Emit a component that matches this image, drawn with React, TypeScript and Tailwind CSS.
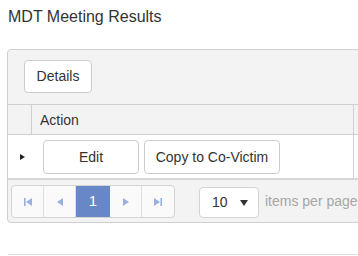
import { useState } from "react";

export default function App() {
  const [page] = useState(1);
  const [size] = useState(10);

  return (
    <div className="w-[358px] h-[256px] overflow-hidden bg-white font-['Liberation_Sans',Arial,sans-serif] text-[#333]">
      <h1 className="pl-[8px] pt-[7px] h-[49px] text-[16px] leading-[19px]">MDT Meeting Results</h1>
      <div className="ml-[7px] w-[370px] border border-[#cfcfcf] rounded-[4px] bg-[#f3f3f3]">
        <div className="h-[54px] pl-[16px] pt-[10px]">
          <button className="h-[33px] w-[68px] rounded-[4px] border border-[#ccc] bg-white text-[14px]">
            Details
          </button>
        </div>
        <div className="flex h-[30px] border-t border-[#cfcfcf]">
          <div className="w-[24px] border-r border-[#cfcfcf]" />
          <div className="w-[322px] border-r border-[#cfcfcf] pl-[8px] text-[14px] leading-[30px]">
            Action
          </div>
        </div>
        <div className="flex h-[46px] bg-white border-t border-[#cfcfcf] border-b-2 border-b-[#d6d6d6]">
          <div className="w-[24px] flex items-center justify-center pl-[4px]">
            <span className="w-0 h-0 border-y-[3.5px] border-y-transparent border-l-[5px] border-l-[#222]" />
          </div>
          <div className="w-[322px] border-r border-[#cfcfcf] pl-[11px] pt-[5px] flex gap-[5px]">
            <button className="h-[34px] w-[96px] rounded-[4px] border border-[#ccc] bg-white text-[14px]">Edit</button>
            <button className="h-[34px] w-[136px] rounded-[4px] border border-[#ccc] bg-white text-[14px]">
              Copy to Co-Victim
            </button>
          </div>
        </div>
        <div className="h-[42px] flex items-start pl-[3px] pt-[5px]">
          <div className="flex h-[33px] rounded-[4px] border border-[#d4d4d4] bg-[#fafafa] overflow-hidden">
            <PagerBtn>
              <svg width="8" height="8" viewBox="0 0 8 8"><rect x="0" y="0" width="1.6" height="8" fill="#9ab0de" /><path d="M8 0 L2 4 L8 8Z" fill="#9ab0de" /></svg>
            </PagerBtn>
            <PagerBtn>
              <svg width="6" height="8" viewBox="0 0 6 8"><path d="M6 0 L0 4 L6 8Z" fill="#9ab0de" /></svg>
            </PagerBtn>
            <div className="w-[34px] bg-[#6787c6] text-white text-[15px] flex items-center justify-center">
              {page}
            </div>
            <PagerBtn>
              <svg width="6" height="8" viewBox="0 0 6 8"><path d="M0 0 L6 4 L0 8Z" fill="#9ab0de" /></svg>
            </PagerBtn>
            <PagerBtn last>
              <svg width="8" height="8" viewBox="0 0 8 8"><path d="M0 0 L6 4 L0 8Z" fill="#9ab0de" /><rect x="6.4" y="0" width="1.6" height="8" fill="#9ab0de" /></svg>
            </PagerBtn>
          </div>
          <div className="ml-[24px] mt-[2px] h-[31px] w-[60px] rounded-[4px] border border-[#d4d4d4] bg-white flex items-center pl-[12px] pr-[10px] justify-between text-[14px]">
            <span>{size}</span>
            <span className="w-0 h-0 border-x-[4px] border-x-transparent border-t-[6px] border-t-[#333]" />
          </div>
          <span className="ml-[6px] mt-[8px] text-[14px] leading-[16px] text-[#a6a6a6] whitespace-nowrap">items per page</span>
        </div>
      </div>
      <div className="ml-[8px] mt-[31px] h-px bg-[#ddd]" />
    </div>
  );
}

function PagerBtn({ children, last }: { children: React.ReactNode; last?: boolean }) {
  return (
    <div className={"w-[32px] flex items-center justify-center " + (last ? "" : "border-r border-[#dedede]")}>
      {children}
    </div>
  );
}
